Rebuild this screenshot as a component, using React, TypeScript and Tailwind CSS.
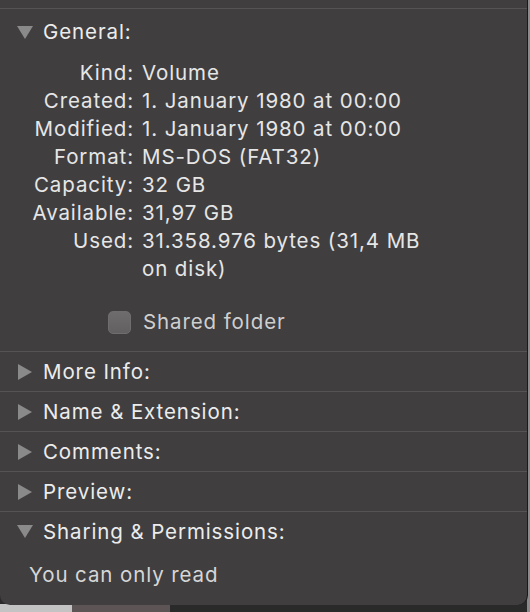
import React from 'react';

const rows: [string, React.ReactNode][] = [
  ['Kind:', 'Volume'],
  ['Created:', '1. January 1980 at 00:00'],
  ['Modified:', '1. January 1980 at 00:00'],
  ['Format:', 'MS-DOS (FAT32)'],
  ['Capacity:', '32 GB'],
  ['Available:', '31,97 GB'],
  ['Used:', (<>31.358.976 bytes (31,4 MB<br />on disk)</>)],
];

function Disclosure({ open }: { open: boolean }) {
  return open ? (
    <svg width="16" height="13" viewBox="0 0 16 13" className="shrink-0">
      <polygon points="0,0 16,0 8,13" fill="#8b8a8b" />
    </svg>
  ) : (
    <svg width="14" height="16" viewBox="0 0 14 16" className="shrink-0">
      <polygon points="0,0 14,8 0,16" fill="#8b8a8b" />
    </svg>
  );
}

function SectionHeader({ title, open }: { title: string; open: boolean }) {
  return (
    <div className="flex items-center h-[40px] pl-[17px] gap-[10px] border-t border-[#555354]">
      <div className="w-[16px] flex justify-center">
        <Disclosure open={open} />
      </div>
      <span className="text-[#ececec]">{title}</span>
    </div>
  );
}

export default function App() {
  return (
    <div
      className="w-[530px] h-[612px] bg-[#2b2a2a] relative overflow-hidden text-[20.5px] leading-[28px] tracking-[0.9px]"
      style={{ fontFamily: 'Inter, "Liberation Sans", sans-serif' }}
    >
      {/* backdrop peeking below the window */}
      <div className="absolute left-0 bottom-0 h-[8px] w-[72px] bg-[#c4c3c3]" />
      <div className="absolute left-[72px] bottom-0 h-[8px] w-[98px] bg-[#5d5455]" />
      <div className="absolute right-0 top-0 h-full w-[3px] bg-[#8a8a8a]" />

      <div className="relative w-[528px] h-[605px] bg-[#403e3f] border-r border-[#1a1a1a] rounded-bl-[10px] rounded-br-[10px] flex flex-col">
        <div className="h-[8px]" />

        {/* General */}
        <div className="border-t border-[#555354]">
          <div className="flex items-center h-[46px] pl-[17px] gap-[10px]">
            <div className="w-[16px] flex justify-center">
              <Disclosure open />
            </div>
            <span className="text-[#ececec]">General:</span>
          </div>
          <div className="grid grid-cols-[134px_1fr] gap-x-[8px] pt-[4px] text-[#e6e6e6]">
            {rows.map(([k, v]) => (
              <React.Fragment key={k}>
                <div className="text-right">{k}</div>
                <div>{v}</div>
              </React.Fragment>
            ))}
          </div>
          <div className="flex items-center h-[40px] mt-[19px] pl-[108px] gap-[12px] mb-[9px]">
            <span className="w-[23px] h-[23px] rounded-[5px] bg-gradient-to-b from-[#6e6c6d] to-[#626061] border border-[#6f6d6e]" />
            <span className="text-[#cfcfcf]">Shared folder</span>
          </div>
        </div>

        <SectionHeader title="More Info:" open={false} />
        <SectionHeader title="Name & Extension:" open={false} />
        <SectionHeader title="Comments:" open={false} />
        <SectionHeader title="Preview:" open={false} />
        <SectionHeader title="Sharing & Permissions:" open />
        <div className="pl-[29px] pt-[10px] text-[#d6d6d6]">You can only read</div>
      </div>
    </div>
  );
}
